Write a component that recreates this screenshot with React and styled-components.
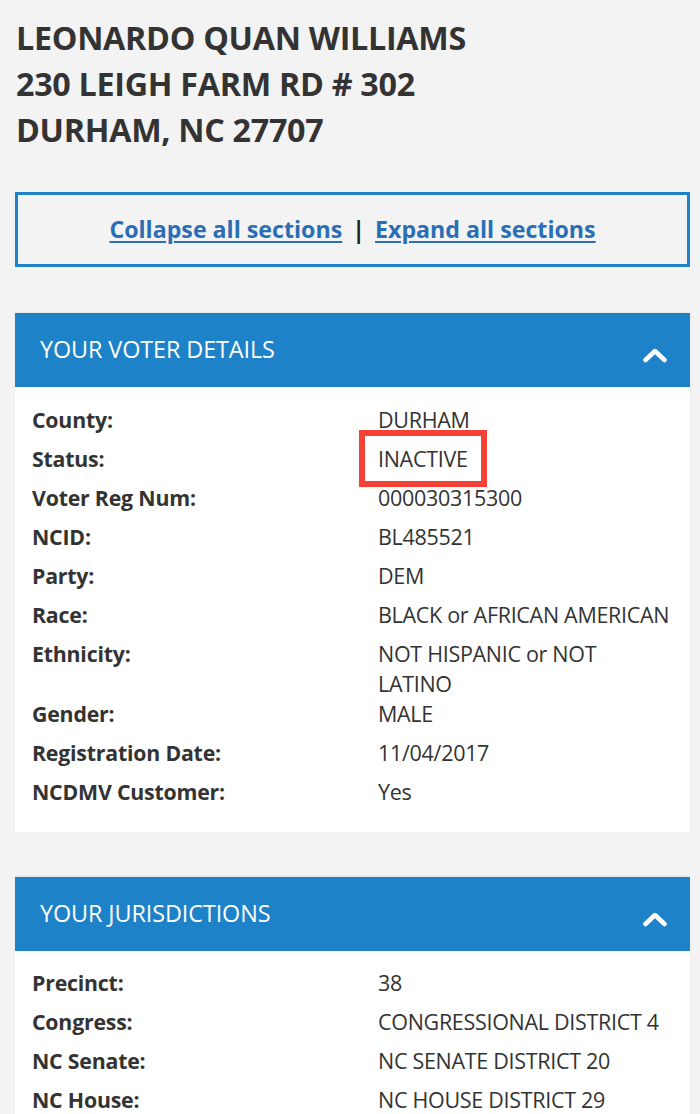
import React from "react";
import styled, { createGlobalStyle } from "styled-components";

const Global = createGlobalStyle`
  html, body { margin: 0; padding: 0; background: #f3f3f3; }
  body { font-family: "Open Sans", "Liberation Sans", sans-serif; color: #333; }
`;

const Page = styled.div`
  padding: 14px 10px 0 15px;
  width: 700px;
  box-sizing: border-box;
`;

const Address = styled.h1`
  margin: 0 0 0 1px;
  font-size: 32.3px;
  line-height: 46px;
  font-weight: 700;
  color: #333;
  letter-spacing: -0.3px;
`;

const LinkBox = styled.div`
  margin-top: 40px;
  height: 75px;
  box-sizing: border-box;
  border: 3px solid #1e82c8;
  display: flex;
  align-items: center;
  justify-content: center;
  gap: 10px;
  font-size: 23.2px;
  font-weight: 700;
  color: #222;
  padding-bottom: 2px;
`;

const Link = styled.a`
  color: #2a6eb5;
  text-decoration: underline;
  text-underline-offset: 3px;
  cursor: pointer;
`;

const Section = styled.section`
  margin-top: ${(p) => p.$top}px;
  box-shadow: 0 -1px 2px rgba(0, 0, 0, 0.06);
`;

const Header = styled.div`
  height: 74px;
  background: #1e82c8;
  color: #fff;
  display: flex;
  align-items: center;
  justify-content: space-between;
  padding: 0 22px 3px 25px;
  box-sizing: border-box;
  font-size: 23.4px;
  font-weight: 400;
  letter-spacing: -0.1px;
`;

const Chevron = styled.svg`
  width: 26px;
  height: 16px;
  margin-top: 13px;
`;

const Body = styled.div`
  background: #fff;
  padding: ${(p) => p.$pt}px 17px ${(p) => p.$pb}px 17px;
`;

const Row = styled.div`
  display: grid;
  grid-template-columns: 346px 294px;
  min-height: 39px;
  line-height: 30px;
`;

const Label = styled.div`
  font-size: 21.3px;
  font-weight: 700;
  color: #333;
  letter-spacing: -0.2px;
`;

const Value = styled.div`
  font-size: 21.5px;
  color: #333;
  letter-spacing: -0.3px;
`;

const Highlight = styled.span`
  position: relative;
  &::after {
    content: "";
    position: absolute;
    left: -19px;
    right: -19px;
    top: -14px;
    bottom: -14px;
    border: 6px solid #f44336;
    pointer-events: none;
  }
`;

const Up = () => (
  <Chevron viewBox="0 0 26 16">
    <polyline points="3.5,13 13,4 22.5,13" fill="none" stroke="#fff" strokeWidth="4.5" strokeLinecap="round" strokeLinejoin="round" />
  </Chevron>
);

const voter = [
  ["County:", "DURHAM"],
  ["Status:", "INACTIVE", true],
  ["Voter Reg Num:", "000030315300"],
  ["NCID:", "BL485521"],
  ["Party:", "DEM"],
  ["Race:", "BLACK or AFRICAN AMERICAN"],
  ["Ethnicity:", "NOT HISPANIC or NOT LATINO"],
  ["Gender:", "MALE"],
  ["Registration Date:", "11/04/2017"],
  ["NCDMV Customer:", "Yes"],
];

const juris = [
  ["Precinct:", "38"],
  ["Congress:", "CONGRESSIONAL DISTRICT 4"],
  ["NC Senate:", "NC SENATE DISTRICT 20"],
  ["NC House:", "NC HOUSE DISTRICT 29"],
];

const Rows = ({ data }) =>
  data.map(([l, v, hi]) => (
    <Row key={l}>
      <Label>{l}</Label>
      <Value>{hi ? <Highlight>{v}</Highlight> : v}</Value>
    </Row>
  ));

export default function App() {
  return (
    <>
      <Global />
      <Page>
        <Address>
          LEONARDO QUAN WILLIAMS
          <br />
          230 LEIGH FARM RD # 302
          <br />
          DURHAM, NC 27707
        </Address>
        <LinkBox>
          <Link>Collapse all sections</Link>
          <span>|</span>
          <Link>Expand all sections</Link>
        </LinkBox>
        <Section $top={46}>
          <Header>
            <span>YOUR VOTER DETAILS</span>
            <Up />
          </Header>
          <Body $pt={18} $pb={16}>
            <Rows data={voter} />
          </Body>
        </Section>
        <Section $top={45}>
          <Header>
            <span>YOUR JURISDICTIONS</span>
            <Up />
          </Header>
          <Body $pt={17} $pb={16}>
            <Rows data={juris} />
          </Body>
        </Section>
      </Page>
    </>
  );
}
